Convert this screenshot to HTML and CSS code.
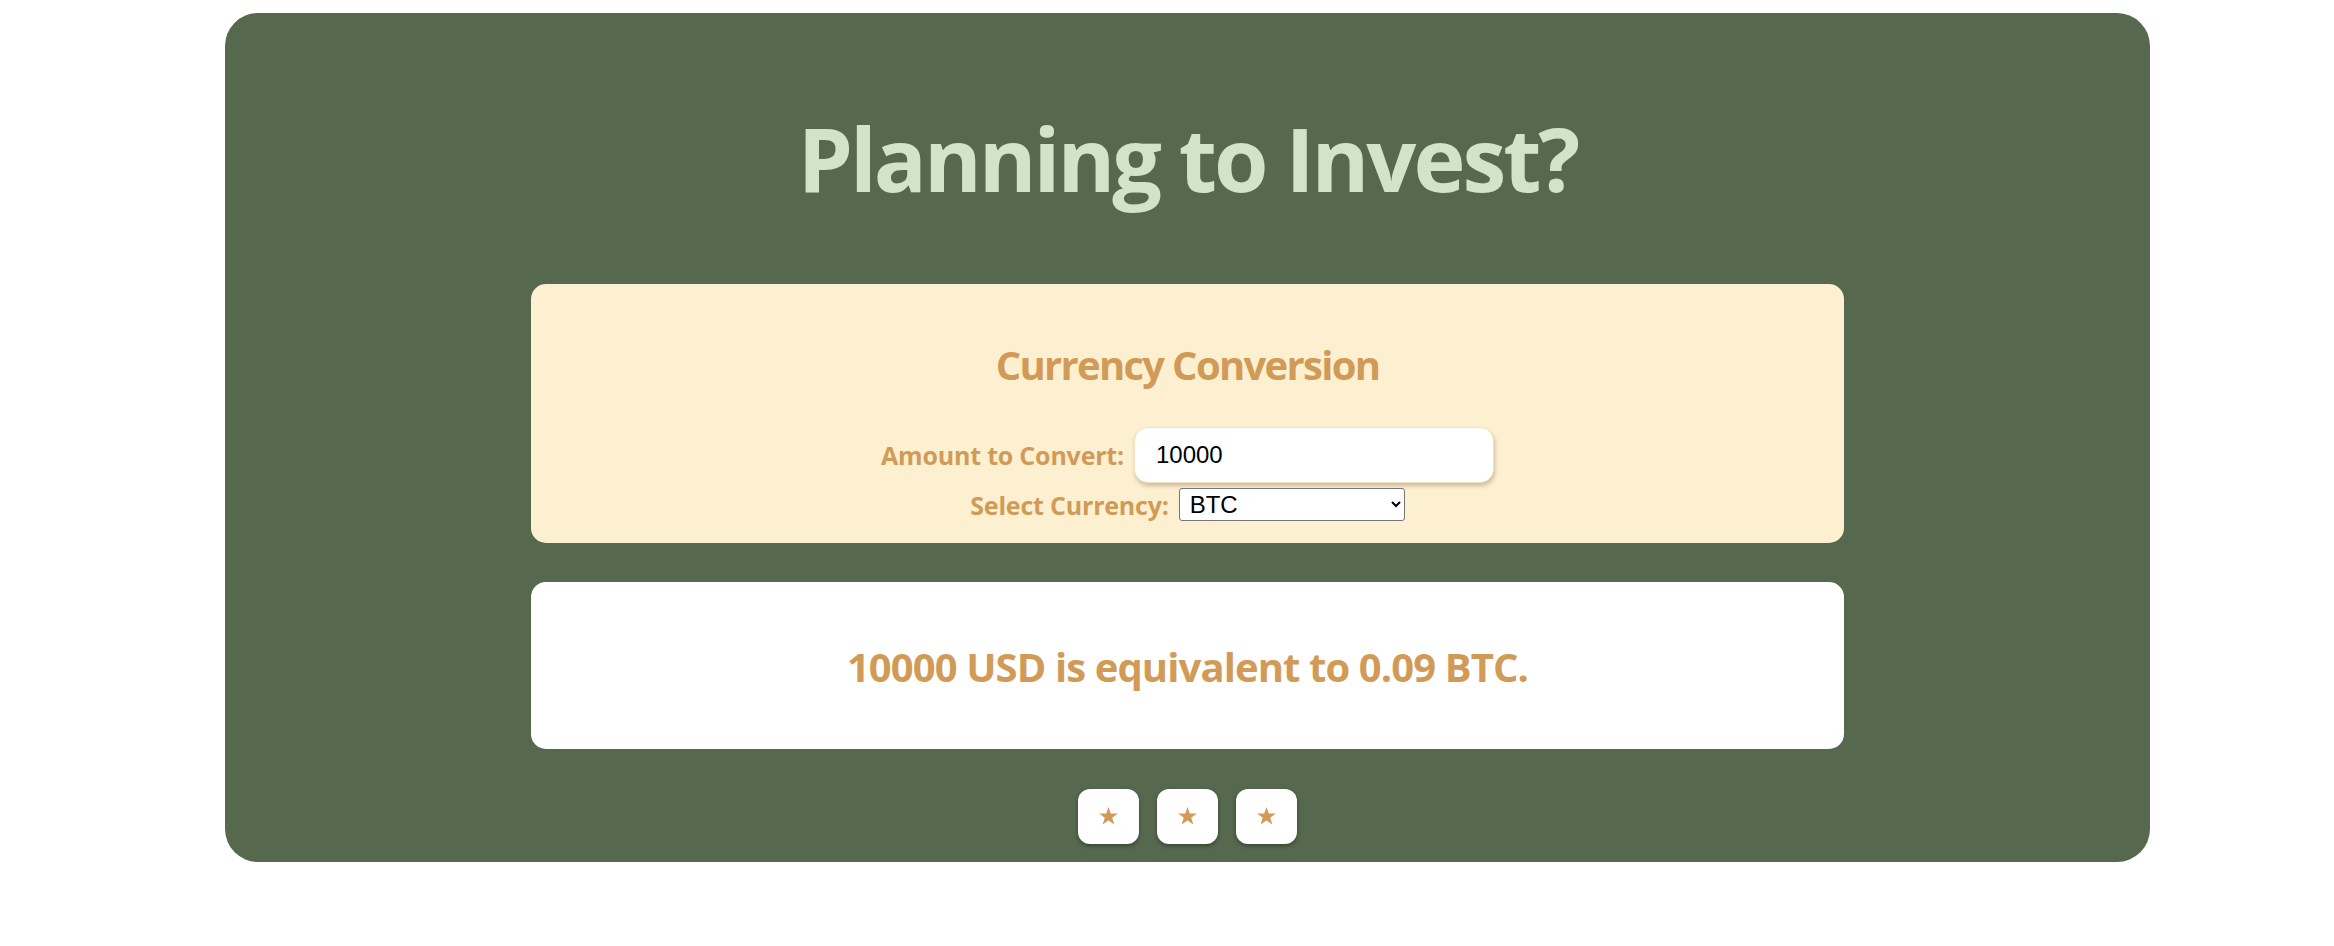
FILE: index.html
```html
<!DOCTYPE html>
<html lang="en">
<head>
<meta charset="utf-8">
<title>Planning to Invest?</title>
<link rel="stylesheet" href="styles.css">
</head>
<body>
<div class="page">
  <section class="card">
    <h1 class="title">Planning to Invest?</h1>
    <div class="panel converter">
      <h2 class="panel-title">Currency Conversion</h2>
      <div class="row">
        <label class="label" for="amount">Amount to Convert:</label>
        <input class="amount" id="amount" type="text" value="10000">
      </div>
      <div class="row">
        <label class="label" for="currency">Select Currency:</label>
        <select class="currency" id="currency">
          <option>BTC</option>
          <option>ETH</option>
        </select>
      </div>
    </div>
    <div class="panel result">
      <p class="result-text">10000 USD is equivalent to 0.09 BTC.</p>
    </div>
    <div class="stars">
      <button class="star-btn" type="button"><svg viewBox="0 0 24 23" width="19" height="18"><path d="M12 0l2.9 8.2H24l-7.2 5.5 2.7 8.8L12 17.2l-7.5 5.3 2.7-8.8L0 8.2h9.1z"/></svg></button>
      <button class="star-btn" type="button"><svg viewBox="0 0 24 23" width="19" height="18"><path d="M12 0l2.9 8.2H24l-7.2 5.5 2.7 8.8L12 17.2l-7.5 5.3 2.7-8.8L0 8.2h9.1z"/></svg></button>
      <button class="star-btn" type="button"><svg viewBox="0 0 24 23" width="19" height="18"><path d="M12 0l2.9 8.2H24l-7.2 5.5 2.7 8.8L12 17.2l-7.5 5.3 2.7-8.8L0 8.2h9.1z"/></svg></button>
    </div>
  </section>
</div>
</body>
</html>
```
FILE: styles.css
```css
* { box-sizing: border-box; }
html, body { margin: 0; padding: 0; background: #ffffff; }
body { font-family: "Open Sans", "Noto Sans", sans-serif; }

.page {
  padding: 13px 0 0 225px;
}

.card {
  width: 1925px;
  background: #56694f;
  border-radius: 33px;
  padding: 93px 0 18px;
  display: flex;
  flex-direction: column;
  align-items: center;
}

.title {
  margin: 0;
  font-size: 88px;
  line-height: 1.2;
  font-weight: 700;
  color: #d1e3c9;
  letter-spacing: -3px;
}

.panel {
  width: 1313px;
  border-radius: 15px;
  text-align: center;
}

.converter {
  margin-top: 72px;
  background: #fdf0d1;
  padding: 57px 0 21px;
}

.panel-title {
  margin: 0 0 38px;
  font-size: 40px;
  line-height: 48px;
  font-weight: 700;
  color: #d19b57;
  letter-spacing: -1.7px;
}

.row {
  display: flex;
  justify-content: center;
  align-items: center;
  gap: 10px;
}
.row + .row { margin-top: 5px; }

.label {
  font-size: 25px;
  font-weight: 700;
  color: #d19b57;
  letter-spacing: -0.2px;
}

.amount {
  width: 360px;
  height: 56px;
  border: 1px solid #f1e4c6;
  border-radius: 14px;
  background: #ffffff;
  box-shadow: 1px 3px 4px rgba(120, 95, 50, 0.35);
  padding: 0 0 0 21px;
  font-family: "Liberation Sans", Arial, sans-serif;
  font-size: 24px;
  color: #000;
  outline: none;
}

.currency {
  width: 226px;
  height: 33px;
  border: 1px solid #767676;
  border-radius: 3px;
  background: #ffffff;
  font-family: "Liberation Sans", Arial, sans-serif;
  font-size: 24px;
  color: #000;
  padding: 0 0 0 6px;
}

.result {
  margin-top: 39px;
  background: #ffffff;
  padding: 61px 0 58px;
}

.result-text {
  margin: 0;
  font-size: 40px;
  line-height: 48px;
  font-weight: 700;
  color: #d19b57;
  letter-spacing: -0.9px;
}

.stars {
  margin-top: 40px;
  display: flex;
  gap: 18px;
}

.star-btn {
  width: 61px;
  height: 55px;
  border: none;
  border-radius: 12px;
  background: #ffffff;
  box-shadow: 0 2px 4px rgba(0, 0, 0, 0.35);
  display: flex;
  align-items: center;
  justify-content: center;
  padding: 0;
  cursor: pointer;
}
.star-btn svg { fill: #d19b57; display: block; }
```
